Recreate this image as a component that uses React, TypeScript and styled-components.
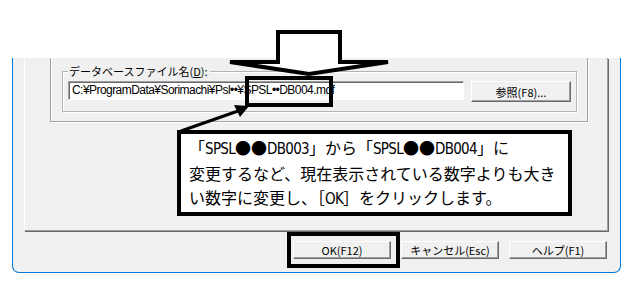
import styled, { createGlobalStyle } from "styled-components";

// ダイアログの見た目を再現し、その上に説明用の矢印と吹き出しを重ねます。
const GlobalStyle = createGlobalStyle`
  html, body {
    margin: 0;
    padding: 0;
    background: #ffffff;
  }
  body {
    font-family: "Noto Sans CJK JP", "Liberation Sans", sans-serif;
  }
`;

const Page = styled.div`
  position: relative;
  width: 634px;
  height: 286px;
  overflow: hidden;
  background: #ffffff;
  padding-top: 58px;
  box-sizing: border-box;
`;

const Window = styled.div`
  margin-left: 12px;
  width: 609px;
  height: 215px;
  box-sizing: border-box;
  border: 1px solid #0078d7;
  border-top: none;
  border-radius: 0 0 7px 7px;
  background: #f0f0f0;
  padding: 0 12px 0 11px;
  display: flex;
  flex-direction: column;
`;

const TabPage = styled.div`
  height: 173px;
  box-sizing: border-box;
  border-left: 1px solid #ffffff;
  border-right: 1px solid #a0a0a0;
  border-bottom: 1px solid #a0a0a0;
  box-shadow: 1px 1px 0 #696969;
  padding-left: 25px;
`;

const OuterBox = styled.div`
  width: 538px;
  height: 64px;
  box-sizing: border-box;
  border: 1px solid #a0a0a0;
  border-top: none;
  box-shadow: inset 1px 0 0 #ffffff, 1px 1px 0 #ffffff;
  padding: 13px 0 0 11px;
`;

const GroupBox = styled.div`
  position: relative;
  width: 515px;
  height: 41px;
  box-sizing: border-box;
  border: 1px solid #b4b4b4;
  box-shadow: inset 1px 1px 0 #ffffff, 1px 1px 0 #ffffff;
  padding: 9px 0 0 5px;
  display: flex;
  gap: 7px;
`;

const GroupLabel = styled.span`
  position: absolute;
  top: -8px;
  left: 5px;
  padding: 0 2px 0 1px;
  background: #f0f0f0;
  font-size: 11px;
  line-height: 14px;
  color: #000;
  u {
    text-decoration: underline;
  }
`;

const TextBox = styled.div`
  width: 396px;
  height: 19px;
  box-sizing: border-box;
  background: #ffffff;
  border: 1px solid;
  border-color: #a0a0a0 #ffffff #ffffff #a0a0a0;
  box-shadow: inset 1px 1px 0 #696969;
  padding: 0 0 0 3px;
  font-family: "Liberation Sans", "Noto Sans CJK JP", sans-serif;
  font-size: 12px;
  letter-spacing: -0.55px;
  line-height: 17px;
  color: #000;
  white-space: nowrap;
  overflow: hidden;
`;

const Button = styled.div<{ $w?: number; $h?: number }>`
  width: ${(p) => p.$w ?? 98}px;
  height: ${(p) => p.$h ?? 18}px;
  box-sizing: border-box;
  background: #f0f0f0;
  border: 1px solid;
  border-color: #ffffff #696969 #696969 #ffffff;
  box-shadow: inset -1px -1px 0 #a0a0a0;
  display: flex;
  align-items: center;
  justify-content: center;
  font-size: 11px;
  color: #000;
  white-space: nowrap;
`;

const ButtonRow = styled.div`
  margin-top: 10px;
  display: flex;
  justify-content: flex-end;
  gap: 10px;
  padding-right: 1px;
`;

// ここから注釈（画面の上に重ねるもの）
const Overlay = styled.svg`
  position: absolute;
  left: 0;
  top: 0;
  pointer-events: none;
`;

const Highlight = styled.div<{ $x: number; $y: number; $w: number; $h: number }>`
  position: absolute;
  left: ${(p) => p.$x}px;
  top: ${(p) => p.$y}px;
  width: ${(p) => p.$w}px;
  height: ${(p) => p.$h}px;
  box-sizing: border-box;
  border: 4px solid #000;
`;

const Callout = styled.div`
  position: absolute;
  left: 177px;
  top: 130px;
  width: 395px;
  height: 86px;
  box-sizing: border-box;
  border: 4px solid #000;
  background: #ffffff;
  padding: 1px 0 0 8px;
  font-family: "Noto Sans CJK JP", sans-serif;
  font-size: 16px;
  line-height: 24px;
  color: #000;
  white-space: nowrap;
`;

// 半角英数字は細めの書体で
const Narrow = styled.span`
  font-family: "DejaVu Sans Condensed", "Liberation Sans", sans-serif;
  font-size: 15px;
  letter-spacing: -0.7px;
`;

export default function App() {
  return (
    <>
      <GlobalStyle />
      <Page>
        <Window>
          <TabPage>
            <OuterBox>
              <GroupBox>
                <GroupLabel>
                  データベースファイル名(<u>D</u>):
                </GroupLabel>
                <TextBox>C:¥ProgramData¥Sorimachi¥Psl••¥SPSL••DB004.mdf</TextBox>
                <Button $w={100} $h={21}>参照(F8)...</Button>
              </GroupBox>
            </OuterBox>
          </TabPage>
          <ButtonRow>
            <Button>OK(F12)</Button>
            <Button>キャンセル(Esc)</Button>
            <Button>ヘルプ(F1)</Button>
          </ButtonRow>
        </Window>

        <Overlay width="634" height="286" viewBox="0 0 634 286">
          <polygon
            points="278,32 340,32 340,62 388,62 309,74 230,62 278,62"
            fill="#ffffff"
            stroke="#000"
            strokeWidth="4"
            strokeLinejoin="miter"
          />
          <line x1="181" y1="131" x2="238" y2="111" stroke="#000" strokeWidth="3" />
          <polygon points="249,106 234,105 240,117" fill="#000" />
        </Overlay>

        <Highlight $x={245} $y={76} $w={88} $h={31} />
        <Highlight $x={287} $y={232} $w={113} $h={36} />

        <Callout>
          「<Narrow>SPSL</Narrow>●●<Narrow>DB003</Narrow>」から「<Narrow>SPSL</Narrow>●●<Narrow>DB004</Narrow>」に
          <br />
          変更するなど、現在表示されている数字よりも大き
          <br />
          い数字に変更し、［<Narrow>OK</Narrow>］をクリックします。
        </Callout>
      </Page>
    </>
  );
}
